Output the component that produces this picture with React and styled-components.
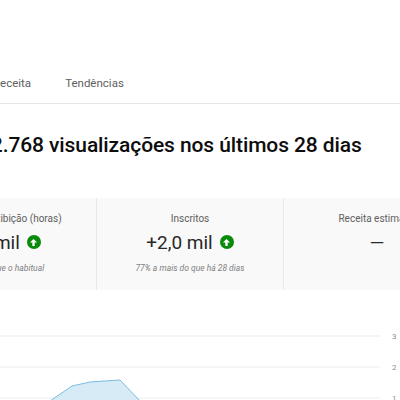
import React from "react";
import styled, { createGlobalStyle } from "styled-components";

const G = createGlobalStyle`
  body { margin: 0; background: #fff; font-family: Roboto, "Liberation Sans", sans-serif; overflow: hidden; }
`;
const Page = styled.div`width: 400px; height: 400px; overflow: hidden; position: relative;`;
const Inner = styled.div`margin-left: -91px; width: 660px; padding-top: 74px;`;
const Tabs = styled.div`display: flex; gap: 34px; padding-left: 84px; height: 30px; border-bottom: 1px solid #e5e5e5; box-sizing: border-box;`;
const Tab = styled.div`font-size: 11.5px; color: #606060; padding-top: 2px;`;
const Head = styled.h1`margin: 29px 0 0 70px; font-size: 21px; font-weight: 500; color: #0d0d0d; white-space: nowrap; letter-spacing: -0.1px;`;
const Stats = styled.div`margin-top: 41px; display: grid; grid-template-columns: 187px 187px 187px; background: #f9f9f9; height: 92px;`;
const Col = styled.div`text-align: center; padding-top: 15px; border-left: ${p => p.first ? "none" : "1px solid #e8e8e8"}; white-space: nowrap;`;
const Label = styled.div`font-size: 10px; color: #606060;`;
const Value = styled.div`font-size: 19px; color: #282828; margin-top: 5px; display: flex; align-items: center; justify-content: center; gap: 7px; height: 26px;`;
const Up = styled.span`width: 14px; height: 14px; border-radius: 50%; background: #0a8a0a; display: inline-flex; align-items: center; justify-content: center;`;
const Sub = styled.div`font-size: 8.5px; font-style: italic; color: #808080; margin-top: 8px;`;
const Chart = styled.svg`display: block;`;

const Arrow = () => (
  <Up><svg width="9" height="9" viewBox="0 0 10 10"><path d="M5 1 L9 5 H6.3 V9 H3.7 V5 H1 Z" fill="#fff"/></svg></Up>
);

export default function App() {
  return (
    <Page>
      <G />
      <Inner>
        <Tabs><Tab>Receita</Tab><Tab>Tendências</Tab></Tabs>
        <Head>12.768 visualizações nos últimos 28 dias</Head>
        <Stats>
          <Col first><Label>Tempo de exibição (horas)</Label><Value>1,2 mil <Arrow /></Value><Sub>Mais do que o habitual</Sub></Col>
          <Col><Label>Inscritos</Label><Value>+2,0 mil <Arrow /></Value><Sub>77% a mais do que há 28 dias</Sub></Col>
          <Col><Label>Receita estimada</Label><Value>—</Value><Sub>&nbsp;</Sub></Col>
        </Stats>
      </Inner>
      <Chart width="400" height="111">
        <line x1="0" y1="46" x2="380" y2="46" stroke="#ececec" />
        <line x1="0" y1="77" x2="380" y2="77" stroke="#ececec" />
        <line x1="0" y1="108" x2="380" y2="108" stroke="#ececec" />
        <path d="M50 111 L72 96 L90 92 L120 90 L140 111 Z" fill="#d6ebf6" stroke="#7bbce0" strokeWidth="1" />
        <text x="392" y="49" fontSize="8" fill="#909090">3</text>
        <text x="392" y="80" fontSize="8" fill="#909090">2</text>
        <text x="392" y="111" fontSize="8" fill="#909090">1</text>
      </Chart>
    </Page>
  );
}
